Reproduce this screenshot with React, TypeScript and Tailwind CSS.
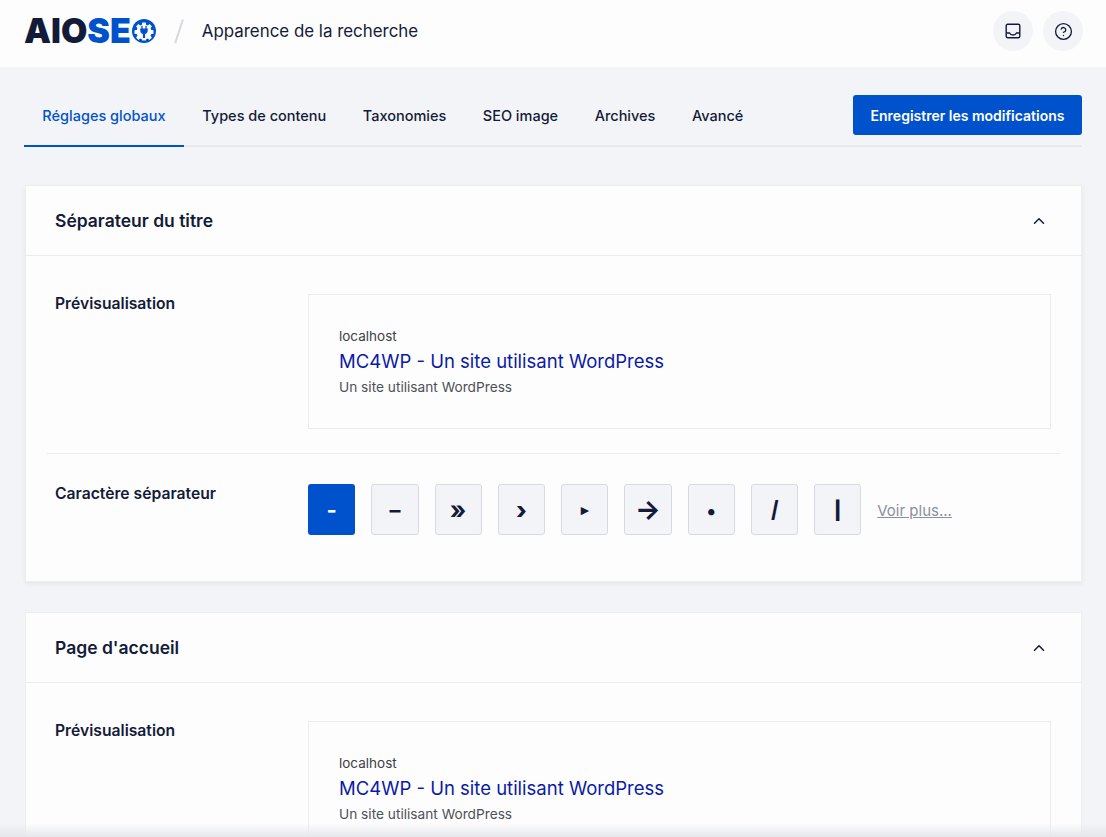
import { ChevronUp, CircleHelp } from "lucide-react";

const separators = [
  { char: "-", size: "text-[22px] font-bold" },
  { char: "–", size: "text-[22px] font-bold" },
  { char: "»", size: "text-[25px] font-bold" },
  { char: "›", size: "text-[24px] font-extrabold" },
  { char: "▸", size: "text-[15px] font-bold" },
  { char: "→", size: "text-[27px] font-bold" },
  { char: "•", size: "text-[20px] font-bold" },
  { char: "/", size: "text-[23px] font-black scale-x-75" },
  { char: "|", size: "text-[18px] font-black" },
];
const tabs = ["Types de contenu", "Taxonomies", "SEO image", "Archives", "Avancé"];

const GearLogo = () => (
  <svg viewBox="0 0 24 24" className="w-[24px] h-[24px] ml-[1px]">
    <circle cx="12" cy="12" r="12" fill="#0052cc" />
    <path
      fill="#fdfdfe"
      d="M10.300 3.500h3.400l.4 2.200 1.600.7 1.900-1.300 2.300 2.300-1.300 1.900.7 1.600 2.200.4v3.400l-2.200.4-.7 1.600 1.300 1.900-2.300 2.300-1.900-1.300-1.600.7-.4 1.300h-3.400l-.4-1.300-1.600-.7-1.900 1.300-2.300-2.300 1.300-1.900-.7-1.600-2.200-.4v-3.400l2.200-.4.7-1.600-1.300-1.900 2.300-2.300 1.900 1.300 1.600-.7z"
    />
    <path
      fill="#0052cc"
      d="M9.300 6.800h1.300v2.700h2.800V6.800h1.300v2.700h1.100v1.600c0 2.200-1.100 3.500-2.700 3.900V19h-2.200v-4c-1.600-.4-2.700-1.700-2.700-3.900V9.500h1.100z"
    />
  </svg>
);

const InboxIcon = () => (
  <svg viewBox="0 0 16 16" className="w-[16px] h-[16px]" fill="none" stroke="#141b38" strokeWidth="1.400">
    <rect x="1.200" y="1.200" width="13.600" height="13.600" rx="1.500" />
    <path d="M1.200 10h3.300c.6 1.400 1.900 2 3.500 2s2.900-.6 3.500-2h3.300" />
  </svg>
);

const Preview = () => (
  <div className="flex-1 h-[135px] border border-[#ececef] pl-[30px] pt-[32px]">
    <div className="text-[13.500px] leading-[18px] text-[#3c4043]">localhost</div>
    <div className="mt-[3px] text-[18.500px] leading-[27px] text-[#0a1aa8]">MC4WP - Un site utilisant WordPress</div>
    <div className="mt-[3px] text-[13.700px] leading-[18px] text-[#4d5156]">Un site utilisant WordPress</div>
  </div>
);

const CardHeader = ({ title }: { title: string }) => (
  <div className="h-[70px] flex items-center justify-between pl-[29px] pr-[33px] border-b border-[#ececef]">
    <h2 className="pt-[2px] text-[17.500px] font-semibold text-[#141b38]">{title}</h2>
    <ChevronUp className="w-[18px] h-[18px] text-[#141b38]" strokeWidth={2} />
  </div>
);

export default function App() {
  return (
    <div
      className="relative h-[837px] overflow-hidden bg-[#f3f4f7] text-[#141b38]"
      style={{ fontFamily: "Inter, 'Liberation Sans', sans-serif" }}
    >
      {/* Top header */}
      <header className="h-[67px] bg-[#fdfdfe] flex items-center pl-[24px] pr-[23px] pb-[5px]">
        <div className="flex items-center text-[34px] font-black leading-none">
          <span>AIO</span>
          <span className="text-[#0052cc]">SE</span>
          <GearLogo />
        </div>
        <div className="ml-[22px] w-[2px] h-[25px] bg-[#d8d9de] rotate-[18deg]" />
        <div className="ml-[22px] pt-[2px] text-[16.900px] text-[#141b38]">Apparence de la recherche</div>
        <div className="ml-auto flex items-center gap-[10px]">
          <div className="w-[40px] h-[40px] rounded-full bg-[#f3f4f7] flex items-center justify-center">
            <InboxIcon />
          </div>
          <div className="w-[40px] h-[40px] rounded-full bg-[#f3f4f7] flex items-center justify-center">
            <CircleHelp className="w-[19px] h-[19px]" strokeWidth={1.700} />
          </div>
        </div>
      </header>

      {/* Tabs */}
      <div className="mx-[24px] h-[80px] flex items-end justify-between border-b-2 border-[#e8e9ed]">
        <div className="flex text-[14.500px] font-medium -mb-[2px]">
          <div className="h-[52px] w-[160px] flex items-center justify-center text-[#0052cc] border-b-2 border-[#0052cc] pb-[8px]">
            Réglages globaux
          </div>
          {tabs.map((t) => (
            <div key={t} className="h-[52px] px-[18.250px] flex items-center pb-[10px] whitespace-nowrap">
              {t}
            </div>
          ))}
        </div>
        <button className="mb-[10px] w-[229px] h-[40px] rounded-[3px] bg-[#0052cc] text-white text-[14px] font-semibold">
          Enregistrer les modifications
        </button>
      </div>

      {/* Title separator card */}
      <section className="mt-[38px] ml-[25px] mr-[24px] h-[397px] bg-[#fdfdfe] border border-[#eeeef1] shadow-[0_2px_5px_rgba(0,0,0,0.06)]">
        <CardHeader title="Séparateur du titre" />
        <div className="flex pt-[38px] pl-[29px] pr-[30px]">
          <div className="w-[253px] text-[15.700px] leading-[20px] font-semibold">Prévisualisation</div>
          <Preview />
        </div>
        <div className="mt-[24px] mx-[21px] border-t border-[#ececef]" />
        <div className="flex pt-[30px] pl-[29px]">
          <div className="w-[253px] text-[15.700px] leading-[20px] font-semibold">Caractère séparateur</div>
          <div className="flex items-center gap-[16px]">
            {separators.map((s, i) => (
              <div
                key={s.char}
                className={
                  i === 0
                    ? "w-[47.250px] h-[51px] pt-[2px] rounded-[3px] bg-[#0052cc] text-white flex items-center justify-center"
                    : "w-[47.250px] h-[51px] pt-[2px] rounded-[3px] bg-[#f3f4f7] border border-[#d8d9e3] flex items-center justify-center"
                }
              >
                <span className={s.size}>{s.char}</span>
              </div>
            ))}
            <span className="pt-[3px] text-[15px] text-[#8c8f9a] underline">Voir plus...</span>
          </div>
        </div>
      </section>

      {/* Home page card */}
      <section className="mt-[30px] ml-[25px] mr-[24px] h-[400px] bg-[#fdfdfe] border border-[#eeeef1]">
        <CardHeader title="Page d'accueil" />
        <div className="flex pt-[38px] pl-[29px] pr-[30px]">
          <div className="w-[253px] text-[15.700px] leading-[20px] font-semibold">Prévisualisation</div>
          <Preview />
        </div>
      </section>

      {/* Fade at the bottom of the page */}
      <div className="absolute bottom-0 left-0 right-0 h-[14px] bg-gradient-to-b from-transparent to-[#e6e7ea]" />
    </div>
  );
}
